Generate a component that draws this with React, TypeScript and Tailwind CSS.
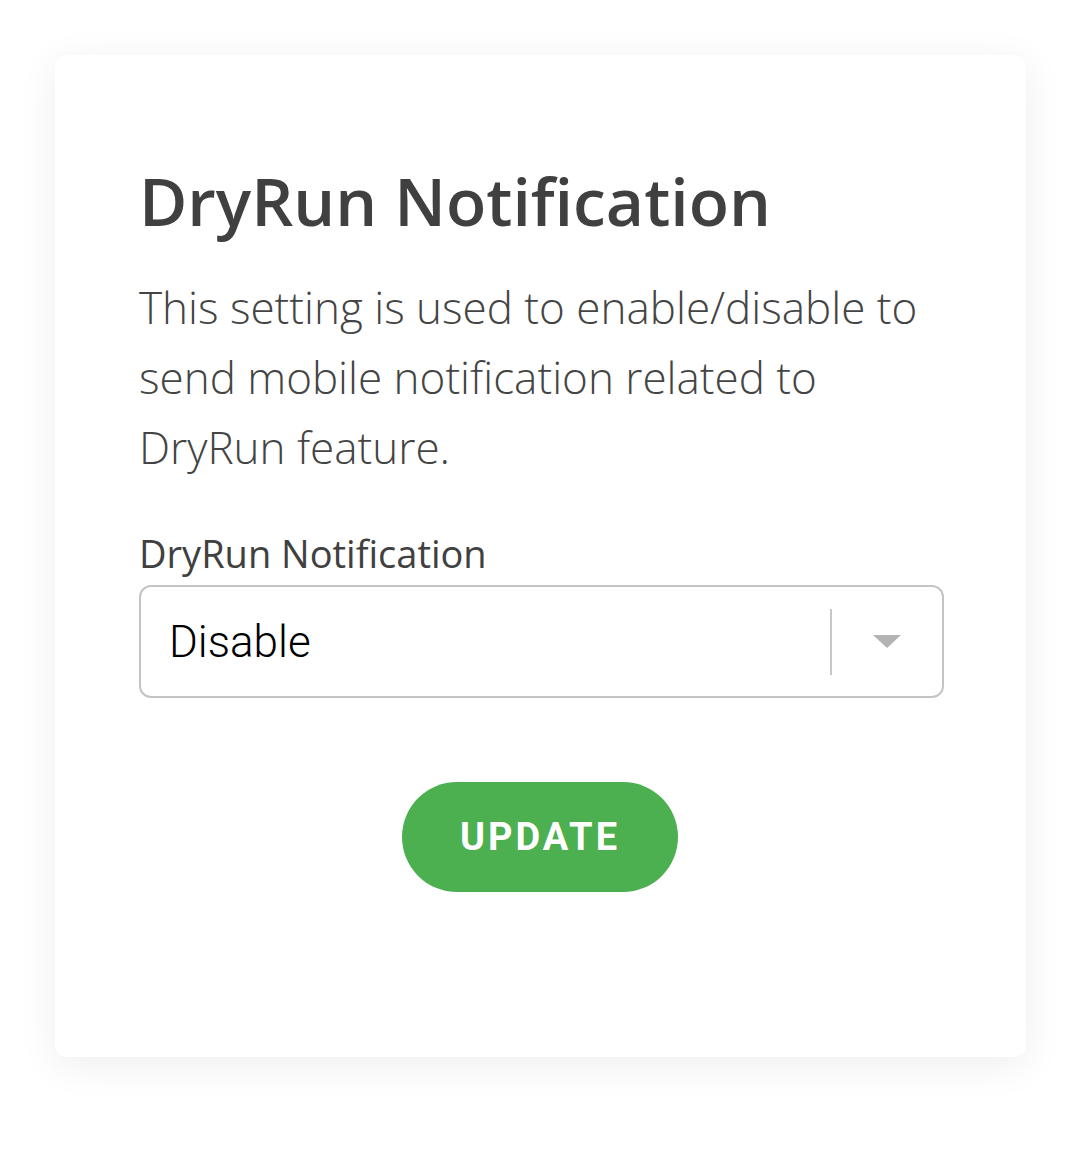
import React from "react";

export default function App() {
  return (
    <div className="min-h-[1153px] w-[1080px] bg-white pt-[55px] pl-[55px]">
      <div className="w-[971px] h-[1002px] rounded-[12px] bg-white shadow-[0_8px_40px_rgba(0,0,0,0.07)] pl-[84px] pr-[83px] pt-[100px]">
        <h1
          className="text-[66px] leading-[90px] font-semibold text-[#404040]"
          style={{ fontFamily: '"Open Sans", sans-serif' }}
        >
          DryRun Notification
        </h1>
        <p
          className="mt-[27px] text-[44px] leading-[70px] font-light text-[#444444]"
          style={{ fontFamily: '"Open Sans", sans-serif' }}
        >
          This setting is used to enable/disable to send mobile notification related to DryRun feature.
        </p>
        <label
          className="block mt-[47px] text-[38px] leading-[48px] text-[#404040]"
          style={{ fontFamily: '"Open Sans", sans-serif' }}
        >
          DryRun Notification
        </label>
        <div className="mt-[8px] flex items-center h-[113px] w-[805px] rounded-[12px] border-2 border-[#c4c4c4] pl-[28px]">
          <span
            className="flex-1 text-[44px] font-light text-black"
            style={{ fontFamily: 'Roboto, sans-serif' }}
          >
            Disable
          </span>
          <div className="w-[2px] h-[66px] bg-[#c8c8c8]" />
          <div className="w-[110px] flex justify-center">
            <svg width="28" height="14" viewBox="0 0 28 14">
              <path d="M0 0 L28 0 L14 13 Z" fill="#b3b3b3" />
            </svg>
          </div>
        </div>
        <div className="flex justify-center mt-[84px] pr-[2px]">
          <button
            className="w-[276px] h-[110px] rounded-full bg-[#4caf50] text-white text-[38px] font-bold tracking-[3px]"
            style={{ fontFamily: 'Roboto, sans-serif' }}
          >
            UPDATE
          </button>
        </div>
      </div>
    </div>
  );
}
